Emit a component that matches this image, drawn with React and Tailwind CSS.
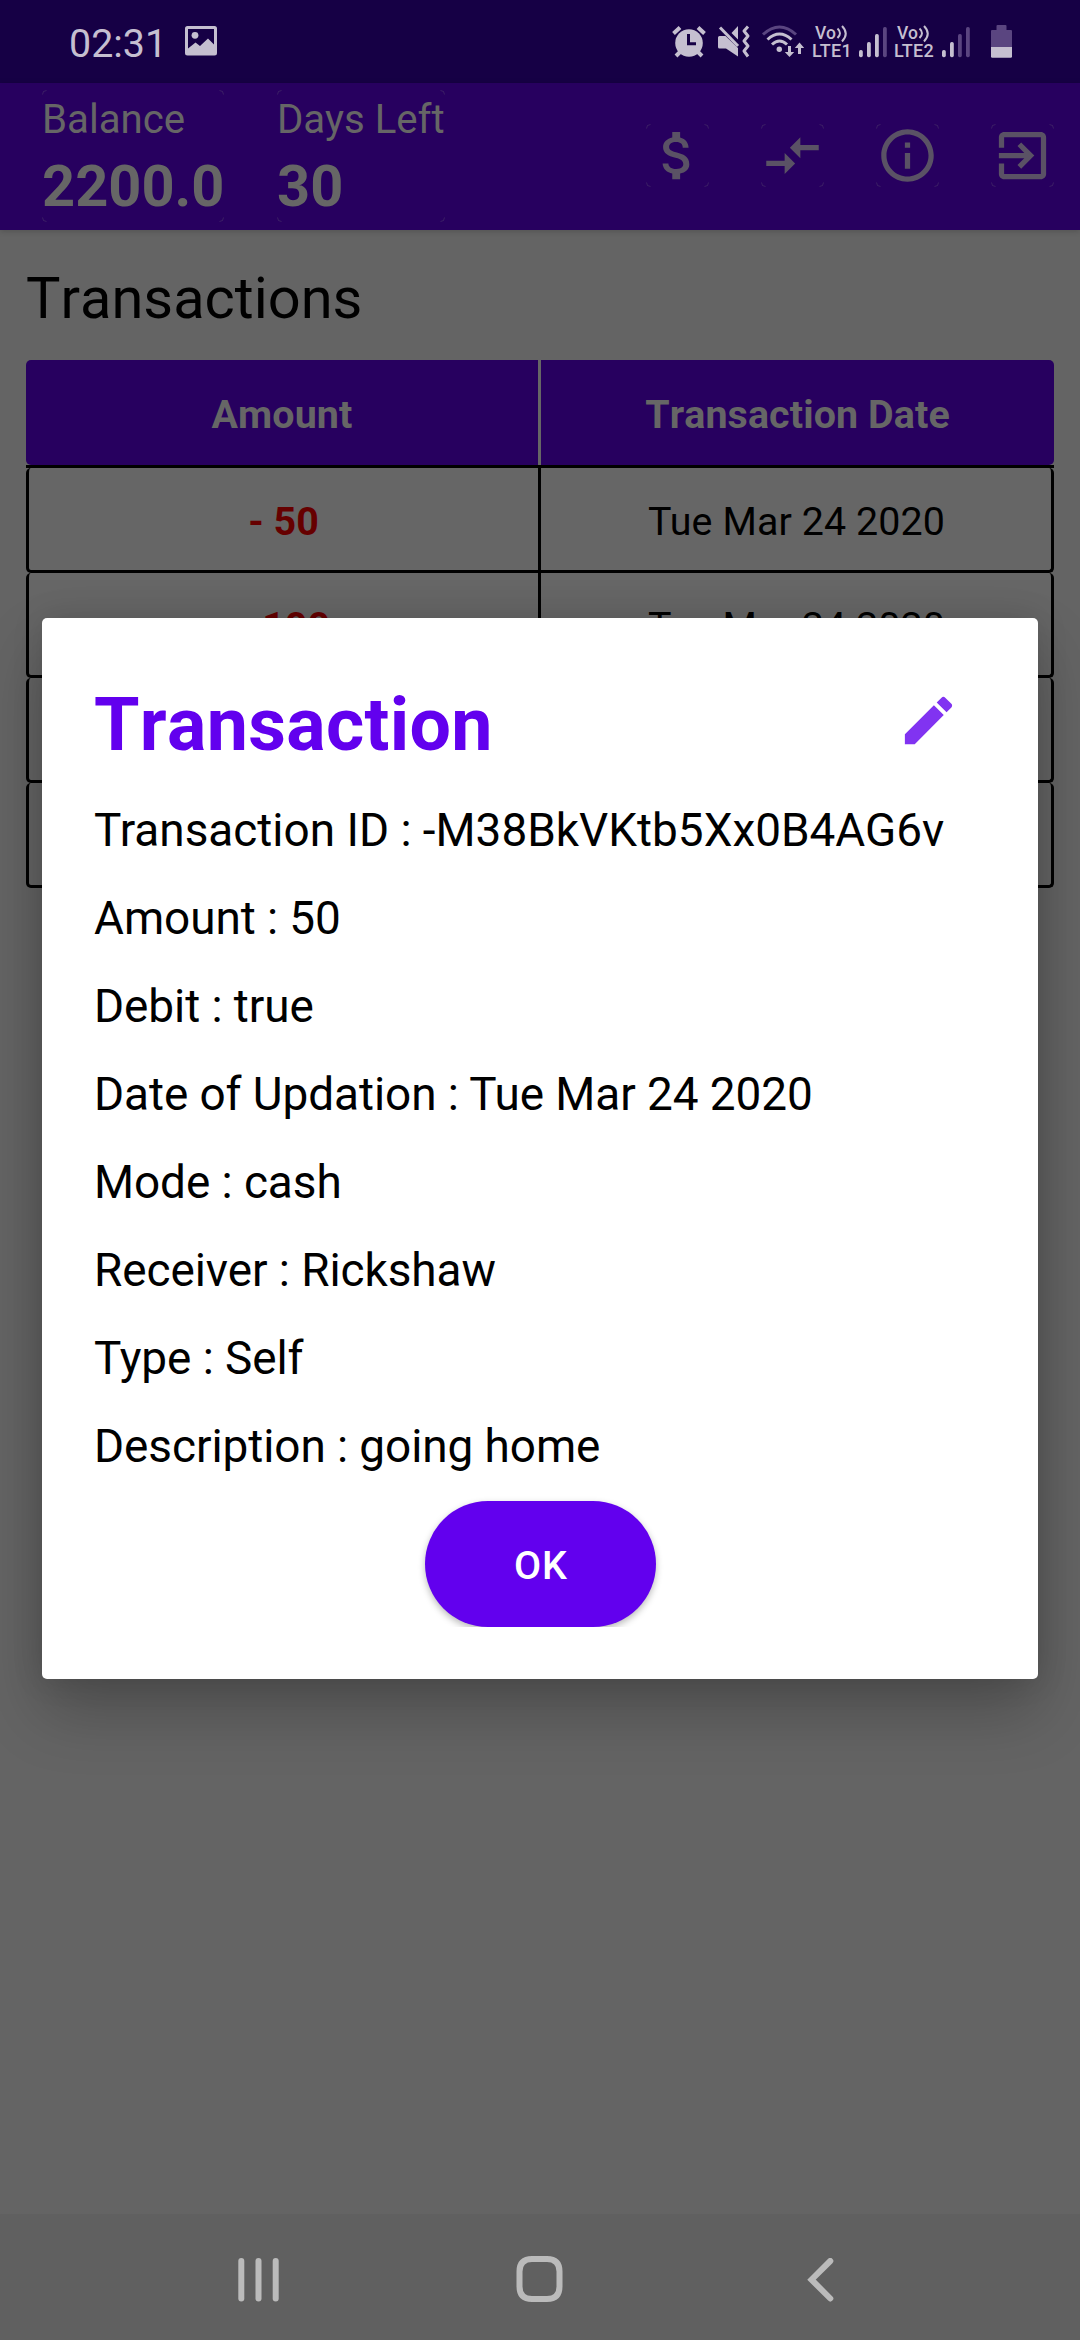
import React from "react";

const details = [
  "Amount : 50",
  "Debit : true",
  "Date of Updation : Tue Mar 24 2020",
  "Mode : cash",
  "Receiver : Rickshaw",
  "Type : Self",
  "Description : going home",
];

const rows = [
  { amount: "- 50", date: "Tue Mar 24 2020" },
  { amount: "- 100", date: "Tue Mar 24 2020" },
  { amount: "", date: "" },
  { amount: "", date: "" },
];

/* Faint rounded corner marks around the touchable areas of the app bar. */
function Corners({ w, h }) {
  const r = 4;
  const a = 0.5;
  return (
    <svg className="absolute inset-0" width={w} height={h} fill="none" stroke="#55456f" strokeOpacity="0.45" strokeWidth="1">
      <path
        d={`M${a} ${a + r}Q${a} ${a} ${a + r} ${a}M${w - a - r} ${a}Q${w - a} ${a} ${w - a} ${a + r}M${w - a} ${h - a - r}Q${w - a} ${h - a} ${w - a - r} ${h - a}M${a + r} ${h - a}Q${a} ${h - a} ${a} ${h - a - r}`}
      />
    </svg>
  );
}

function BarButton({ children }) {
  return (
    <button className="relative h-[63px] w-[63px]">
      <Corners w={63} h={63} />
      <svg className="relative block" width="63" height="63" viewBox="0 0 24 24" fill="#5a5265">
        {children}
      </svg>
    </button>
  );
}

function Signal({ level }) {
  const bars = [
    [0, 24],
    [8, 16],
    [16, 8],
    [24, 1],
  ];
  return (
    <svg width="28" height="32" viewBox="0 0 28 32">
      {bars.map(([x, y], i) => (
        <rect key={x} x={x} y={y} width="3.8" height={31.3 - y} rx="1.7" fill={i < level ? "#c5bfd0" : "#5a4580"} />
      ))}
    </svg>
  );
}

function Volte({ n }) {
  return (
    <div className="h-8 w-[40px] text-[17.5px] font-medium leading-[18px] text-[#c5bfd0]">
      <div className="flex h-[16px] pl-[3px]">
        <span className="relative -top-[2px]">Vo</span>
        <svg width="13" height="18" viewBox="0 0 13 18" fill="none" stroke="#c5bfd0" strokeWidth="2" className="relative -top-px">
          <path d="M1.500 3.500Q6.500 8 1.500 13M6 1Q13.500 8.500 6 16.500" />
        </svg>
      </div>
      <div className="text-[18px] tracking-[0.3px]">LTE{n}</div>
    </div>
  );
}

function StatusBar() {
  return (
    <div className="flex h-[83px] items-start bg-[#160045] pl-[69px] pt-[25px] text-[#c5bfd0]">
      <div className="w-[116px] text-[39.4px] leading-[37px]">02:31</div>
      <svg className="mt-px" width="32" height="30" viewBox="0 0 32 30">
        <path
          fill="#c5bfd0"
          fillRule="evenodd"
          d="M2.500 0h27Q32 0 32 2.500v24.500Q32 29.500 29.500 29.500h-27Q0 29.500 0 27V2.500Q0 0 2.500 0zM3 3v19.500l7.500-6 4.500 3.500 8-7.500 6 6V3z"
        />
        <circle cx="10" cy="9.300" r="3.400" fill="#c5bfd0" />
      </svg>
      <svg className="ml-[455px]" width="34" height="33" viewBox="672 25 34 33">
        <g stroke="#c5bfd0" strokeLinecap="butt" fill="none">
          <path strokeWidth="4" d="M673.500 33.500l6.500-6M704.500 33.500l-6.500-6" />
          <path strokeWidth="4" d="M681 51l-5 5M697 51l5 5" />
        </g>
        <circle cx="689" cy="43" r="13.800" fill="#c5bfd0" />
        <path d="M688.500 34v9.700h7.500" fill="none" stroke="#160045" strokeWidth="3" />
      </svg>
      <svg className="ml-[12px]" width="32" height="33" viewBox="718 25 32 33">
        <path fill="#c5bfd0" d="M719.500 36h6l12.500 12v8.500L726 48.500h-6.500q-1.500 0-1.500-1.500v-9.500q0-1.500 1.500-1.500zM738 26v13.500l-6.500-6.500z" />
        <path d="M720 27.500l18 18.500" stroke="#c5bfd0" strokeWidth="3" />
        <path d="M748 26.500l-4 4.500 4 5-4 5 4 5-4 5 4 5.500" fill="none" stroke="#c5bfd0" strokeWidth="3" strokeLinejoin="round" />
      </svg>
      <svg className="ml-[12px]" width="42" height="33" viewBox="762 25 42 33">
        <g fill="none" strokeWidth="3">
          <path stroke="#5a4580" d="M763 34.500Q779.500 19.500 796 34.500" />
          <path stroke="#c5bfd0" d="M767.500 39.500Q779.500 28.500 791.500 39.500" />
          <path stroke="#c5bfd0" d="M772 44.500Q779.500 37.500 787 44.500" />
        </g>
        <circle cx="779.300" cy="49.300" r="2.700" fill="#c5bfd0" />
        <path fill="#c5bfd0" d="M788 46h3v6h3.200l-4.700 5-4.700-5h3.200zM798 54h3v-6h3.200l-4.700-5.500-4.700 5.500h3.200z" />
      </svg>
      <div className="ml-[8px] mt-px">
        <Volte n={1} />
      </div>
      <div className="ml-[7px] mt-px">
        <Signal level={3} />
      </div>
      <div className="ml-[7px] mt-px">
        <Volte n={2} />
      </div>
      <div className="ml-[8px] mt-px">
        <Signal level={2} />
      </div>
      <svg className="ml-[21px]" width="21" height="33" viewBox="0 0 21 33">
        <path fill="#5a4580" d="M6.500 0h8q1 0 1 1v4H20q1 0 1 1v16H0V6q0-1 1-1h4.500V1q0-1 1-1z" />
        <path fill="#c5bfd0" d="M0 22h21v9.500q0 1.300-1.300 1.300H1.300Q0 32.800 0 31.500z" />
      </svg>
    </div>
  );
}

function Stat({ label, value, w, wrap }) {
  return (
    <div className={wrap}>
      <Corners w={w} h={132} />
      <div className="relative pt-[6px] text-[40.2px] leading-[47px]">{label}</div>
      <div className="relative pt-[9px] text-[57.75px] font-bold leading-[68px]">{value}</div>
    </div>
  );
}

function AppBar() {
  return (
    <div className="relative flex h-[147px] items-start bg-[#27005f] pl-[42px] pr-[26px] pt-[7px] text-[#666666] shadow-[0_1px_6px_rgba(0,0,0,0.2)]">
      <Stat label="Balance" value="2200.0" w={182} wrap="relative h-[132px] w-[182px] whitespace-nowrap" />
      <Stat label="Days Left" value="30" w={168} wrap="relative ml-[53px] h-[132px] w-[168px] whitespace-nowrap" />
      <div className="ml-auto flex gap-[52px] pt-[34px]">
        <BarButton>
          <path d="M11.800 10.900c-2.270-.59-3-1.200-3-2.150 0-1.090 1.010-1.850 2.700-1.850 1.780 0 2.440.85 2.500 2.100h2.210c-.07-1.720-1.120-3.300-3.210-3.810V3h-3v2.160c-1.940.42-3.500 1.680-3.500 3.610 0 2.310 1.910 3.460 4.700 4.130 2.500.6 3 1.480 3 2.410 0 .69-.49 1.790-2.700 1.790-2.060 0-2.870-.92-2.980-2.100h-2.200c.12 2.190 1.760 3.420 3.680 3.830V21h3v-2.150c1.950-.37 3.500-1.500 3.500-3.550 0-2.840-2.430-3.810-4.700-4.400z" />
        </BarButton>
        <BarButton>
          <path d="M9.010 14H2v2h7.010v3L13 15l-3.990-4v3zm5.980-1v-3H22V8h-7.010V5L11 9l3.990 4z" />
        </BarButton>
        <BarButton>
          <path d="M11 7h2v2h-2zm0 4h2v6h-2zm1-9C6.480 2 2 6.480 2 12s4.480 10 10 10 10-4.480 10-10S17.520 2 12 2zm0 18c-4.410 0-8-3.590-8-8s3.590-8 8-8 8 3.590 8 8-3.590 8-8 8z" />
        </BarButton>
        <BarButton>
          <path d="M10.090 15.590L11.500 17l5-5-5-5-1.410 1.410L12.670 11H3v2h9.670l-2.580 2.590zM19 3H5c-1.110 0-2 .9-2 2v4h2V5h14v14H5v-4H3v4c0 1.100.89 2 2 2h14c1.100 0 2-.9 2-2V5c0-1.100-.9-2-2-2z" />
        </BarButton>
      </div>
    </div>
  );
}

function TransactionTable() {
  return (
    <div className="mx-[26px] text-center text-[39.4px]">
      <div className="flex h-[105px] overflow-hidden rounded-[5px] bg-[#27005f] font-bold leading-[109px] tracking-[0.1px] text-[#666666] [font-kerning:none]">
        <div className="w-[512px]">Amount</div>
        <div className="w-[3px] bg-[#666666]" />
        <div className="flex-1">Transaction Date</div>
      </div>
      <div className="h-[3px] bg-black" />
      {rows.map((row, i) => (
        <div
          key={i}
          className="flex h-[105px] rounded-[5px] border-x-[3px] border-b-[3px] border-black bg-[#666666] leading-[107px]"
        >
          <div className="w-[509px] font-bold text-[#660000]">{row.amount}</div>
          <div className="w-[3px] bg-black" />
          <div className="flex-1 pl-px tracking-[0.1px] text-black">{row.date}</div>
        </div>
      ))}
    </div>
  );
}

function NavBar() {
  return (
    <div className="flex h-[126px] items-start bg-[#606060] pl-[238px] pt-[42px]">
      <svg className="mt-[2px]" width="41" height="44" fill="#bbbbbb">
        <rect x="0.300" width="6" height="43.500" rx="3" />
        <rect x="17.500" width="6" height="43.500" rx="3" />
        <rect x="34.700" width="6" height="43.500" rx="3" />
      </svg>
      <svg className="ml-[237px]" width="47" height="46" fill="none" stroke="#bbbbbb" strokeWidth="6">
        <path d="M16 3H31Q43.500 3 43.500 15.500V30.500Q43.500 43 31 43H16Q3.500 43 3.500 30.500V15.500Q3.500 3 16 3Z" />
      </svg>
      <svg className="ml-[244px] mt-[2px]" width="27" height="44" fill="none" stroke="#bbbbbb" strokeWidth="6" strokeLinecap="round">
        <path d="M23.300 3L4.500 21.700L23.300 40.500" />
      </svg>
    </div>
  );
}

function TransactionDialog() {
  return (
    <div className="absolute left-[42px] top-[618px] h-[1061px] w-[996px] rounded-[5px] bg-white px-[52px] pt-[52px] text-black shadow-[0_32px_64px_rgba(0,0,0,0.24),0_0_32px_rgba(0,0,0,0.12)]">
      <div className="flex h-[122px] items-start justify-between pr-[26px]">
        <h2 className="pt-[11px] text-[73.5px] font-bold leading-[88px] tracking-[0.3px] text-[#6200ee] [font-kerning:none]">
          Transaction
        </h2>
        <svg className="mt-[19px]" width="63" height="63" viewBox="0 0 24 24" fill="#8133f1">
          <path d="M3 17.250V21h3.750L17.810 9.940l-3.750-3.750L3 17.250zM20.710 7.040c.39-.39.39-1.020 0-1.410l-2.340-2.340c-.39-.39-1.020-.39-1.410 0l-1.830 1.830 3.750 3.750 1.830-1.830z" />
        </svg>
      </div>
      <p className="h-[88px] whitespace-nowrap pt-[10px] text-[45.9px] leading-[56px]">
        Transaction ID : -M38BkVKtb5Xx0B4AG6v
      </p>
      {details.map((line) => (
        <p key={line} className="h-[88px] whitespace-nowrap pt-[10px] text-[45.9px] leading-[56px] tracking-[-0.06px]">
          {line}
        </p>
      ))}
      <div className="-mx-5 flex h-[131px] justify-center overflow-hidden pt-[5px]">
        <button className="h-[126px] w-[231px] rounded-full bg-[#6200ee] pl-[2px] text-[39.4px] font-medium leading-[130px] tracking-[1px] text-white shadow-[0_3px_7px_rgba(0,0,0,0.28)]">
          OK
        </button>
      </div>
    </div>
  );
}

export default function App() {
  return (
    <div className="relative flex h-[2340px] w-[1080px] flex-col overflow-hidden bg-[#646464] font-[Roboto,sans-serif]">
      <StatusBar />
      <AppBar />
      <h1 className="h-[130px] pl-[26px] pt-[30px] text-[57.75px] leading-[76px] text-black [font-kerning:none]">
        Transactions
      </h1>
      <TransactionTable />
      <div className="flex-1" />
      <NavBar />
      <TransactionDialog />
    </div>
  );
}
